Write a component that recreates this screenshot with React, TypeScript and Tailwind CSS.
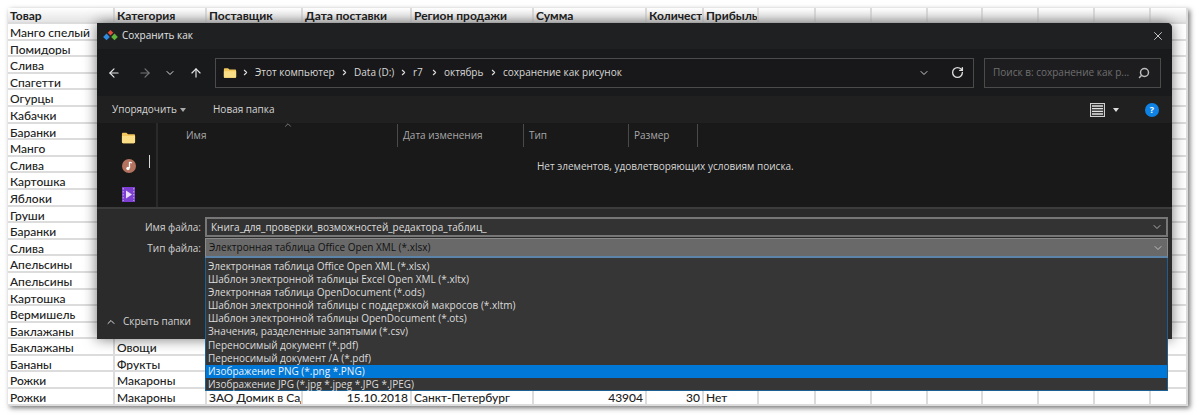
// App.tsx
import { ArrowLeft, ArrowRight, ArrowUp, ChevronDown, ChevronRight, ChevronUp, RotateCw, Search, X } from 'lucide-react';

const colWidths = ['w-[107px]', 'w-[92px]', 'w-[96px]', 'w-[109px]', 'w-[122px]', 'w-[113px]', 'w-[57px]', 'w-[55px]', 'w-[57px]', 'w-[56px]', 'w-[56px]', 'w-[55px]', 'w-[56px]', 'w-[56px]', 'w-[56px]', 'w-[37px]'];

const header = ['Товар', 'Категория', 'Поставщик', 'Дата поставки', 'Регион продажи', 'Сумма', 'Количество', 'Прибыль', '', '', '', '', '', '', '', ''];

const products = ['Манго спелый', 'Помидоры', 'Слива', 'Спагетти', 'Огурцы', 'Кабачки', 'Баранки', 'Манго', 'Слива', 'Картошка', 'Яблоки', 'Груши', 'Баранки', 'Слива', 'Апельсины', 'Апельсины', 'Картошка', 'Вермишель', 'Баклажаны', 'Баклажаны', 'Бананы', 'Рожки', 'Рожки'];

// only what sticks out from under the dialog
const extra: Record<number, string[]> = {
	19: ['Овощи'],
	20: ['Фрукты'],
	21: ['Макароны'],
	22: ['Макароны', 'ЗАО Домик в Саду', '15.10.2018', 'Санкт-Петербург', '43904', '30', 'Нет'],
};

const fileTypes = [
	'Электронная таблица Office Open XML (*.xlsx)',
	'Шаблон электронной таблицы Excel Open XML (*.xltx)',
	'Электронная таблица OpenDocument (*.ods)',
	'Шаблон электронной таблицы с поддержкой макросов (*.xltm)',
	'Шаблон электронной таблицы OpenDocument (*.ots)',
	'Значения, разделенные запятыми (*.csv)',
	'Переносимый документ (*.pdf)',
	'Переносимый документ /A (*.pdf)',
	'Изображение PNG (*.png *.PNG)',
	'Изображение JPG (*.jpg *.jpeg *.JPG *.JPEG)',
];

const crumbs = [
	{ label: 'Этот компьютер', cls: 'w-[79px]' },
	{ label: 'Data (D:)', cls: 'w-[39px]' },
	{ label: 'r7', cls: 'w-[11px]' },
	{ label: 'октябрь', cls: 'w-[39px]' },
	{ label: 'сохранение как рисунок', cls: 'w-[118px]' },
];

function Folder({ className }: { className: string }) {
	return (
		<svg viewBox="0 0 16 13" className={className}>
			<path d="M1 2.2C1 1.5 1.5 1 2.2 1h3.6l1.6 1.6h6.4c.7 0 1.2.5 1.2 1.2v7c0 .7-.5 1.2-1.2 1.2H2.200C1.500 12 1 11.500 1 10.800z" fill="#f3c85c" />
			<path d="M1 4.400h14v6.400c0 .7-.5 1.200-1.200 1.200H2.200C1.500 12 1 11.500 1 10.800z" fill="#fbdf86" />
		</svg>
	);
}

function SheetRow({ cells, index }: { cells: string[]; index: number }) {
	return (
		<div className="flex h-[16.6px] shrink-0">
			{colWidths.map((w, i) => {
				const numeric = index === 22 && (i === 3 || i === 5 || i === 6);
				return (
					<div
						key={i}
						className={`${w} h-full shrink-0 overflow-hidden whitespace-nowrap border-r-2 border-b-2 border-[#dcdcdc] px-[2px] text-[12px] font-medium leading-[17px] text-[#222] ${numeric ? 'text-right' : ''}`}
					>
						{cells[i]}
					</div>
				);
			})}
		</div>
	);
}

function Sheet() {
	return (
		<div className="flex w-[1180px] flex-col overflow-hidden bg-white shadow-[2px_2px_5px_rgba(0,0,0,0.55)] font-['Lato','Open_Sans',sans-serif]">
			<div className="flex h-[16px] shrink-0">
				{colWidths.map((w, i) => (
					<div
						key={i}
						className={`${w} h-full shrink-0 overflow-hidden whitespace-nowrap border-r-2 border-b-2 border-[#dcdcdc] bg-gradient-to-b from-white to-[#e4e4e4] px-[2px] text-[12px] font-bold leading-[16px] text-[#222]`}
					>
						{header[i]}
					</div>
				))}
			</div>
			{products.map((p, i) => (
				<SheetRow key={i} index={i} cells={[p, ...(extra[i] ?? [])]} />
			))}
		</div>
	);
}

function NavBar() {
	return (
		<div className="flex h-[47px] shrink-0 items-center bg-[#191a1c] pl-[10px] pr-[10px]">
			<ArrowLeft className="h-[14px] w-[14px] text-[#e8e8e8]" />
			<ArrowRight className="ml-[17px] h-[14px] w-[14px] text-[#777]" />
			<ChevronDown className="ml-[12px] h-[12px] w-[12px] text-[#ddd]" />
			<ArrowUp className="ml-[13px] h-[14px] w-[14px] text-[#e8e8e8]" />
			<div className="ml-[12px] flex h-[30px] w-[759px] items-center border border-[#4b4b4b] bg-[#18181a] pl-[7px] pr-[9px]">
				<Folder className="h-[14px] w-[14px] shrink-0" />
				{crumbs.map((c) => (
					<div key={c.label} className="flex items-center">
						<ChevronRight className="mx-[4px] h-[9px] w-[9px] text-[#ddd]" strokeWidth={3} />
						<span className={`${c.cls} mr-[2px] ml-[1px] whitespace-nowrap text-[10px] text-[#d8d8d8]`}>{c.label}</span>
					</div>
				))}
				<ChevronDown className="ml-auto h-[12px] w-[12px] text-[#ccc]" />
				<RotateCw className="ml-[21px] h-[13px] w-[13px] text-[#ddd]" strokeWidth={2.500} />
			</div>
			<div className="ml-[10px] flex h-[30px] w-[177px] items-center justify-between border border-[#4b4b4b] bg-[#1d1d1f] pl-[8px] pr-[10px]">
				<span className="whitespace-nowrap text-[10px] text-[#6f6f6f]">Поиск в: сохранение как р...</span>
				<Search className="h-[12px] w-[12px] -scale-x-100 text-[#bbb]" strokeWidth={3} />
			</div>
		</div>
	);
}

function CommandBar() {
	return (
		<div className="flex h-[27px] shrink-0 items-center bg-[#202020] pl-[15px] pr-[13px] text-[10px] text-[#d4d4d4]">
			<span className="w-[63px] whitespace-nowrap">Упорядочить</span>
			<span className="ml-[5px] h-0 w-0 border-x-[3.500px] border-t-[4px] border-x-transparent border-t-[#aaa]" />
			<span className="ml-[27px] whitespace-nowrap">Новая папка</span>
			<svg viewBox="0 0 15 14" className="ml-auto h-[14px] w-[15px]">
				<rect x="0.500" y="0.500" width="14" height="13" fill="#333" stroke="#cfcfcf" />
				<path d="M2 3h11M2 5.700h11M2 8.300h11M2 11h11" stroke="#e2e2e2" strokeWidth="1.300" />
			</svg>
			<span className="ml-[8px] h-0 w-0 border-x-[3.500px] border-t-[4px] border-x-transparent border-t-[#ddd]" />
			<span className="ml-[26px] flex h-[14px] w-[14px] items-center justify-center rounded-full bg-[#0f82e6] text-[9px] font-bold text-white">?</span>
		</div>
	);
}

function FileArea() {
	return (
		<div className="flex h-[84px] shrink-0 bg-[#191919] text-[10px] text-[#a8a8a8]">
			<div className="relative flex w-[61px] shrink-0 flex-col items-center gap-[14px] border-r-2 border-[#2a2a2a] pt-[8px] pl-[4px]">
				<Folder className="h-[14px] w-[15px]" />
				<svg viewBox="0 0 14 14" className="h-[14px] w-[14px]">
					<circle cx="7" cy="7" r="7" fill="#b5735f" />
					<path d="M7.500 3v6M7.500 3l2.500 1" stroke="#fff" strokeWidth="1.300" fill="none" />
					<circle cx="6" cy="9.500" r="1.700" fill="#fff" />
				</svg>
				<svg viewBox="0 0 13 15" className="h-[15px] w-[13px]">
					<rect width="13" height="15" fill="#7c3fd0" />
					<path d="M4 3.500v8l6-4z" fill="#e9dcff" />
					<path d="M1.200 1v13M11.800 1v13" stroke="#c7a8f5" strokeDasharray="1.500 1.500" />
				</svg>
				<span className="absolute top-[32px] left-[52px] h-[13px] w-px bg-[#d8d8d8]" />
			</div>
			<div className="relative min-w-0 flex-1">
				<div className="flex h-[24px] items-center pt-[1px]">
					<span className="w-[239px] pl-[28px]">Имя</span>
					<span className="flex h-full w-[126px] items-center border-l border-[#4a4a4a] pl-[5px]">Дата изменения</span>
					<span className="flex h-full w-[105px] items-center border-l border-[#4a4a4a] pl-[5px]">Тип</span>
					<span className="flex h-full w-[70px] items-center border-x border-[#4a4a4a] pl-[5px]">Размер</span>
				</div>
				<ChevronUp className="absolute top-[-3px] left-[124px] h-[10px] w-[12px] text-[#888]" />
				<p className="mt-[12px] pl-[379px] whitespace-nowrap text-[#d6d6d6]">Нет элементов, удовлетворяющих условиям поиска.</p>
			</div>
		</div>
	);
}

function SaveDialog() {
	return (
		<div className="absolute top-[23px] left-[97px] flex h-[316px] w-[1075px] flex-col rounded-tr-[5px] bg-[#2b2b2b] shadow-[0_0_14px_rgba(0,0,0,0.55)] font-['Open_Sans',sans-serif]">
			<div className="flex h-[26px] shrink-0 items-center rounded-tr-[5px] bg-[#1f2022] pb-[1px] pl-[6px] pr-[7px]">
				<svg viewBox="0 0 15 11" className="h-[11px] w-[15px]">
					<path d="M7.500 0l2.800 2.800-2.800 2.800-2.800-2.800z" fill="#e0503c" />
					<path d="M3.500 3.600l3.300 3.300-3.300 3.300L0.200 6.900z" fill="#2f8ae0" />
					<path d="M11.500 3.600l3.300 3.300-3.300 3.300-3.300-3.300z" fill="#62b43c" />
				</svg>
				<span className="ml-[4px] whitespace-nowrap text-[10px] text-[#e2e2e2]">Сохранить как</span>
				<X className="ml-auto h-[14px] w-[14px] text-[#dcdcdc]" strokeWidth={1.500} />
			</div>
			<NavBar />
			<CommandBar />
			<FileArea />
			<div className="relative flex-1 border-t-2 border-[#3c3c3c] pt-[8px] text-[10px] text-[#d2d2d2]">
				<div className="flex h-[20px] items-center">
					<span className="w-[105px] pr-[1px] text-right">Имя файла:</span>
					<div className="ml-[3px] flex h-full w-[963px] items-center justify-between border-2 border-[#777] bg-[#333] pl-[4px] pr-[3px]">
						<span className="whitespace-nowrap text-[#dedede]">Книга_для_проверки_возможностей_редактора_таблиц_</span>
						<ChevronDown className="h-[12px] w-[12px] text-[#aaa]" />
					</div>
				</div>
				<div className="mt-[1px] flex h-[20px] items-center">
					<span className="w-[105px] pr-[1px] text-right">Тип файла:</span>
					<div className="ml-[3px] flex h-full w-[963px] items-center justify-between border border-b-2 border-[#8a8a8a] border-b-[#5b84a8] bg-[#696969] pl-[3px] pr-[3px]">
						<span className="whitespace-nowrap text-[#111]">Электронная таблица Office Open XML (*.xlsx)</span>
						<ChevronDown className="h-[12px] w-[12px] text-[#bbb]" />
					</div>
				</div>
				<div className="absolute top-[105px] left-[8px] flex items-center gap-[6px]">
					<ChevronUp className="h-[12px] w-[12px] text-[#ddd]" />
					<span className="whitespace-nowrap">Скрыть папки</span>
				</div>
				{/* open list of the type select, hangs below the dialog */}
				<div className="absolute top-[49px] left-[108px] z-10 h-[133px] w-[963px] border-x border-b border-[#1e5f92] bg-[#363636] pt-[2px]">
					{fileTypes.map((t, i) => (
						<div
							key={t}
							className={`h-[13.100px] whitespace-nowrap pl-[2px] text-[10px] leading-[13px] ${i === 8 ? 'bg-[#0078d7] text-[#e8f2fb]' : 'text-[#dcdcdc]'}`}
						>
							{t}
						</div>
					))}
				</div>
			</div>
		</div>
	);
}

export default function App() {
	return (
		<div className="relative h-[416px] w-[1200px] overflow-hidden bg-white pt-[8px] pl-[8px]">
			<Sheet />
			<SaveDialog />
		</div>
	);
}
